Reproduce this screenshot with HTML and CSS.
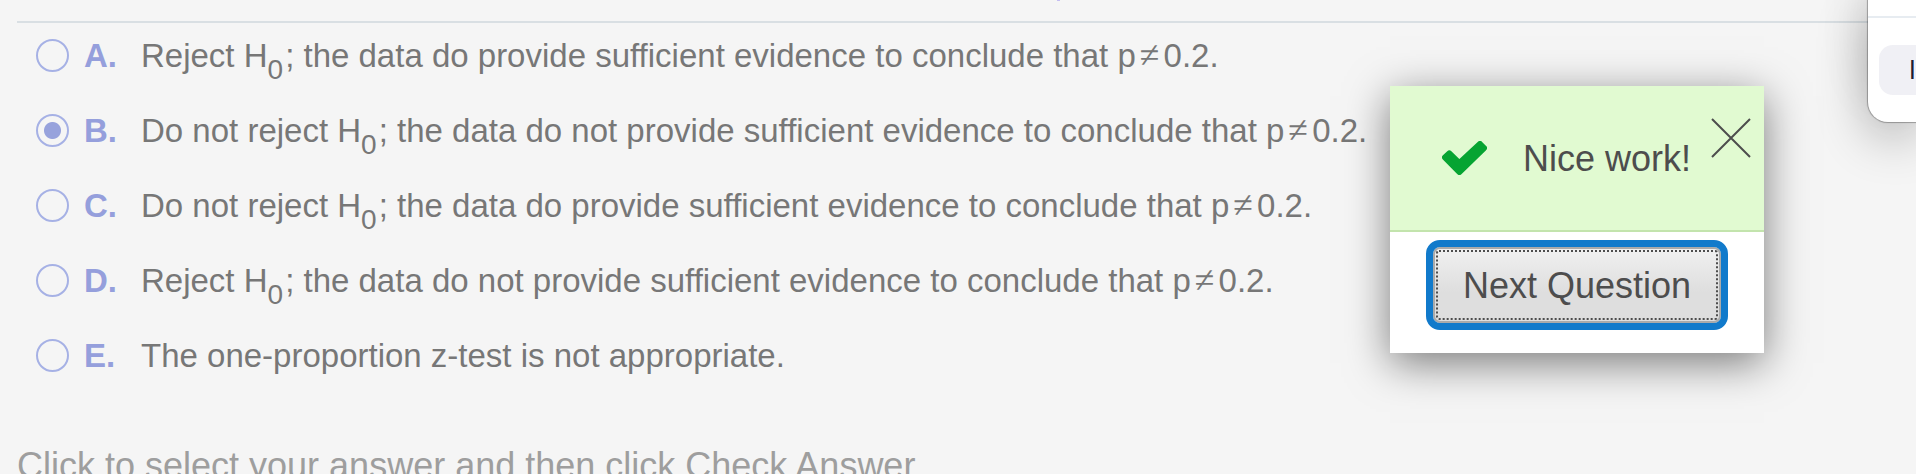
FILE: index.html
```
<!DOCTYPE html>
<html lang="en">
<head>
<meta charset="utf-8">
<title>Question</title>
<link rel="stylesheet" href="styles.css">
</head>
<body>
<main class="question">
  <i class="link-tail"></i>
  <form class="options">
    <label class="option"><input class="radio" type="radio" name="answer"><b class="letter">A.</b><span class="answer">Reject H<sub class="sub">0</sub>; the data do provide sufficient evidence to conclude that p<span class="rel">≠</span>0.2.</span></label>
    <label class="option"><input class="radio" type="radio" name="answer" checked><b class="letter">B.</b><span class="answer">Do not reject H<sub class="sub">0</sub>; the data do not provide sufficient evidence to conclude that p<span class="rel">≠</span>0.2.</span></label>
    <label class="option"><input class="radio" type="radio" name="answer"><b class="letter">C.</b><span class="answer">Do not reject H<sub class="sub">0</sub>; the data do provide sufficient evidence to conclude that p<span class="rel">≠</span>0.2.</span></label>
    <label class="option"><input class="radio" type="radio" name="answer"><b class="letter">D.</b><span class="answer">Reject H<sub class="sub">0</sub>; the data do not provide sufficient evidence to conclude that p<span class="rel">≠</span>0.2.</span></label>
    <label class="option"><input class="radio" type="radio" name="answer"><b class="letter">E.</b><span class="answer">The one-proportion z-test is not appropriate.</span></label>
  </form>
  <p class="hint">Click to select your answer and then click Check Answer</p>
</main>

<section class="feedback" role="dialog" aria-labelledby="feedback-title">
  <header class="feedback-head">
    <svg class="check" viewBox="0 0 45 34" aria-hidden="true"><path d="M3 16.500L7.300 12.500L17.300 22.200L38 3L42 7L17.300 31Z" /></svg>
    <span class="feedback-title" id="feedback-title">Nice work!</span>
    <button class="close" type="button" aria-label="Close"><svg class="cross" viewBox="0 0 40 40" aria-hidden="true"><path d="M1 1L39 39M39 1L1 39" /></svg></button>
  </header>
  <div class="feedback-body">
    <button class="next" type="button"><span class="next-text">Next Question</span></button>
  </div>
</section>

<aside class="panel">
  <div class="panel-top"></div>
  <div class="panel-body"><button class="chip" type="button">I</button></div>
</aside>
</body>
</html>
```
FILE: styles.css
```
* {
  box-sizing: border-box;
}

body {
  margin: 0;
  height: 100vh;
  overflow: hidden;
  position: relative;
  background: #f5f5f5;
  color: #777;
  font-family: "Liberation Sans", Arial, sans-serif;
}

.question {
  padding-top: 21px;
  padding-left: 17px;
}

/* End of a link in the text above the rule */
.link-tail {
  position: absolute;
  top: 0;
  left: 1057px;
  width: 3px;
  height: 1px;
  background: #c4bdf2;
}

.options {
  display: flex;
  flex-direction: column;
  gap: 39px;
  padding: 15px 0 0 19px;
  border-top: 2px solid #d9dfe3;
}

.option {
  display: flex;
  align-items: flex-start;
  height: 36px;
  font-size: 33px;
  line-height: 36px;
  white-space: nowrap;
}

.radio {
  appearance: none;
  width: 33px;
  height: 33px;
  margin: 1px 15px 0 0;
  border: 2px solid #a6b1e5;
  border-radius: 50%;
}

.radio:checked {
  background: radial-gradient(circle, #97a2dc 8px, transparent 9px);
}

.letter {
  width: 57px;
  color: #959fdc;
}

.sub {
  font-size: 28px;
  line-height: 0;
  vertical-align: -12px;
  margin-right: 2px;
}

.rel {
  margin: 0 4px;
  font-family: "Liberation Serif", serif;
  font-size: 36px;
  line-height: 0;
}

.hint {
  margin: 74px 0 0;
  color: #9e9e9e;
  font-size: 36px;
  line-height: 36px;
  white-space: nowrap;
}

.feedback {
  position: absolute;
  top: 86px;
  right: 152px;
  width: 374px;
  background: #fff;
  color: #4d4d4d;
  box-shadow: 0 10px 40px rgba(0, 0, 0, 0.5);
}

.feedback-head {
  display: flex;
  align-items: center;
  padding: 32px 13px 32px 52px;
  background: #e1fad1;
  border-bottom: 2px solid #c3e4ad;
  font-size: 36px;
  line-height: 80px;
}

.feedback-title {
  padding-top: 2px;
  line-height: 78px;
}

.check {
  width: 45px;
  height: 34px;
  margin-right: 36px;
  fill: #06a432;
  stroke: #06a432;
  stroke-width: 6;
}

.check path {
  stroke-linejoin: round;
}

.close {
  align-self: flex-start;
  width: 40px;
  height: 40px;
  margin-left: auto;
  padding: 0;
  border: 0;
  background: none;
}

.cross {
  display: block;
  fill: none;
  stroke: #4d4d4d;
  stroke-width: 2;
}

.feedback-body {
  display: flex;
  justify-content: center;
  padding: 15px 0 30px;
}

.next {
  padding: 1px;
  border: 2px solid #aaa;
  border-radius: 7px;
  outline: 7px solid #117acb;
  background: linear-gradient(#f0f0f0, #dedede 60%);
  color: #4d4d4d;
  font: 36px/64px "Liberation Sans", Arial, sans-serif;
}

.next-text {
  display: block;
  padding: 2px 25px 0;
  border: 2px dotted #4d4d4d;
  border-radius: 3px;
}

.panel {
  position: absolute;
  top: 0;
  right: 0;
  width: 48px;
  background: #fff;
  border-bottom-left-radius: 20px;
  box-shadow: 0 0 1px 1px rgba(0, 0, 0, 0.3), 0 14px 50px rgba(0, 0, 0, 0.3), 0 -30px 50px rgba(0, 0, 0, 0.1);
}

.panel-top {
  height: 18px;
  border-bottom: 2px solid #e7ecf1;
}

.panel-body {
  padding: 27px 0 27px 11px;
}

.chip {
  display: block;
  width: 100%;
  padding: 0 0 0 30px;
  overflow: hidden;
  border: 0;
  border-radius: 14px 0 0 14px;
  background: #f0f0f5;
  color: #1d1f33;
  font: 25px/50px Inter, sans-serif;
  text-align: left;
}
```
